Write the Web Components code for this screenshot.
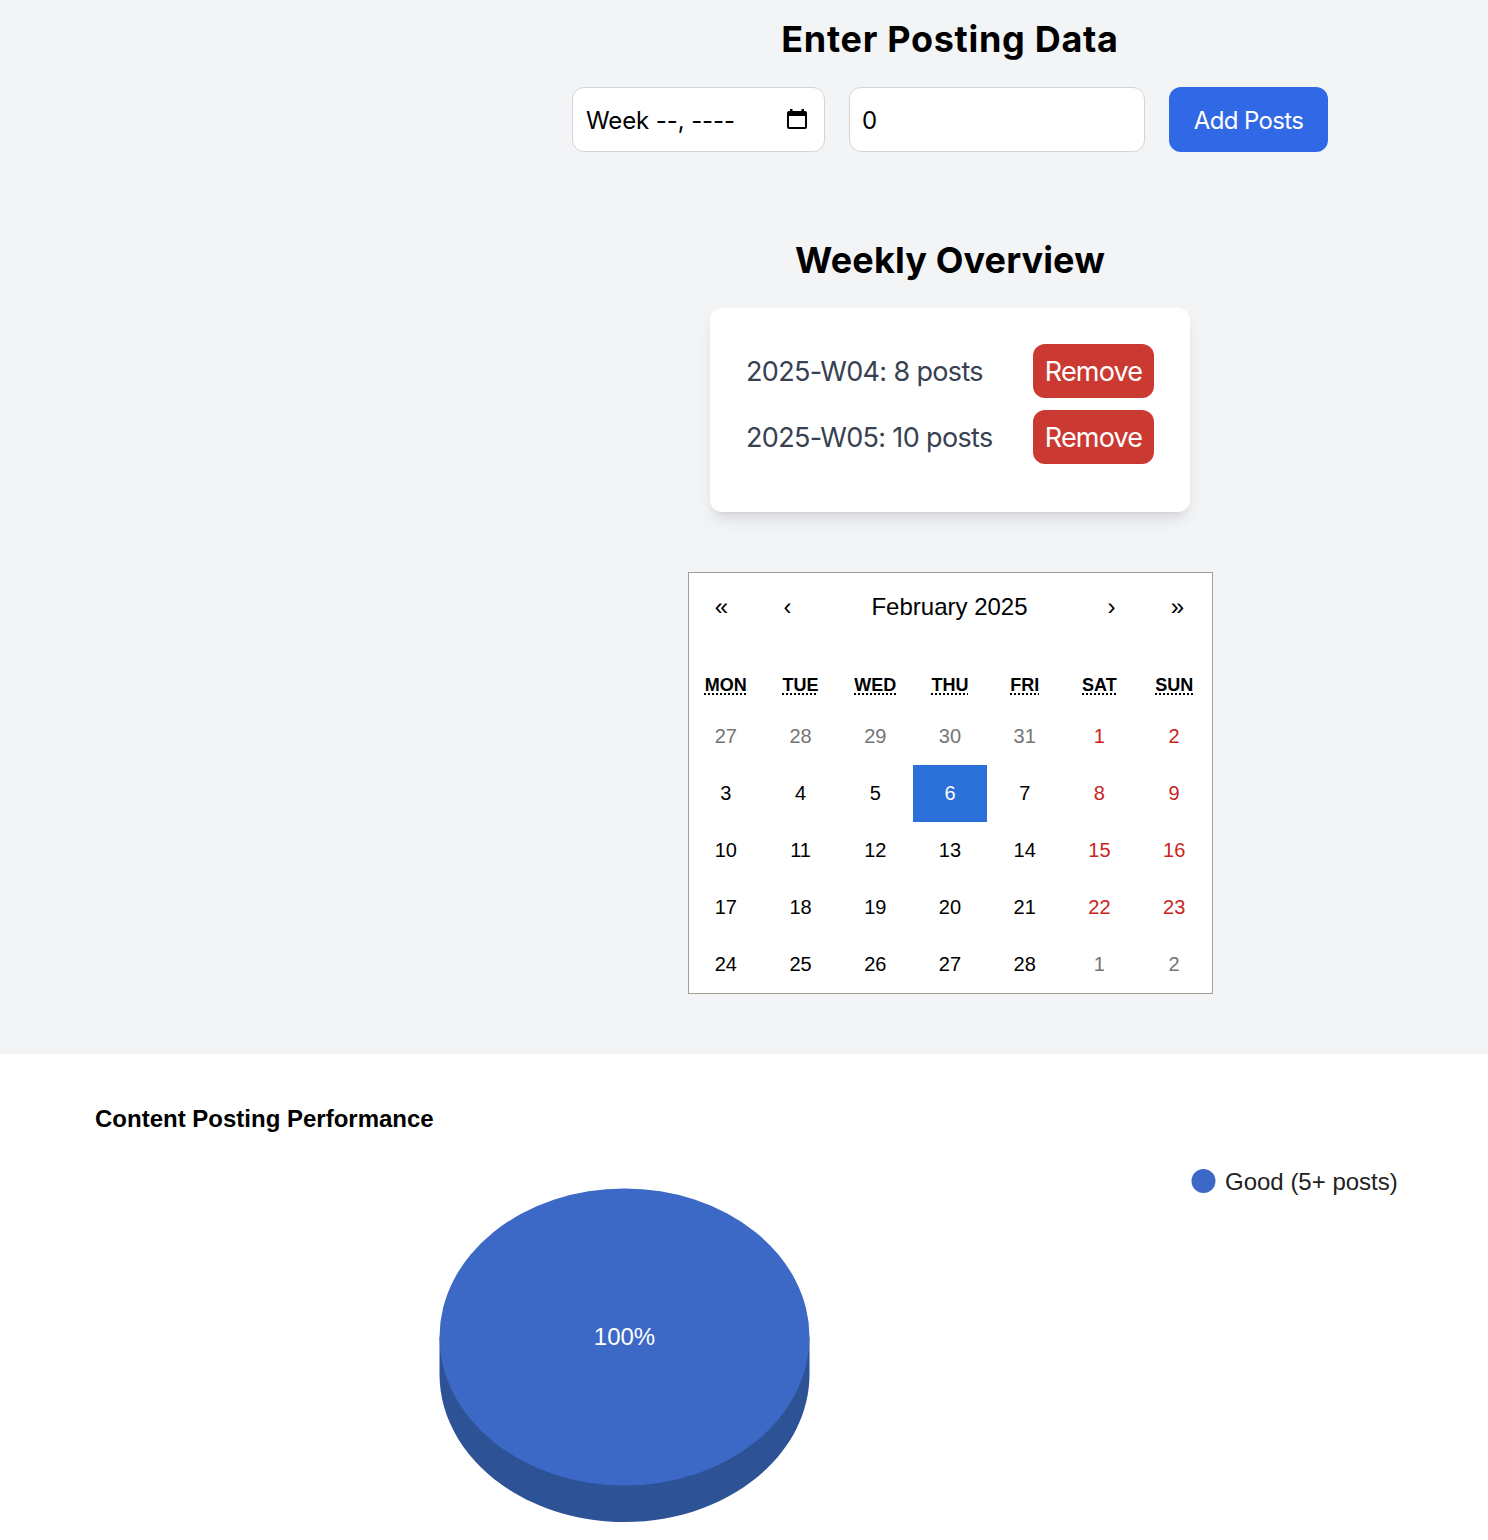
<!doctype html>
<html lang="en">
<head>
<meta charset="utf-8">
<title>Posting dashboard</title>
<style>
  html, body { margin: 0; background: #f3f4f6; }
</style>
</head>
<body>
<posting-page>
  <posting-form></posting-form>
  <weekly-overview>
    <week-row>2025-W04: 8 posts</week-row>
    <week-row>2025-W05: 10 posts</week-row>
  </weekly-overview>
  <post-calendar></post-calendar>
</posting-page>
<posting-chart></posting-chart>

<script>
const html = String.raw;

function define(name, markup) {
  customElements.define(
    name,
    class extends HTMLElement {
      constructor() {
        super();
        this.attachShadow({ mode: "open" });
        this.shadowRoot.innerHTML = markup;
      }
    }
  );
}

define("posting-page", html`
  <style>
    :host {
      display: flex;
      flex-direction: column;
      align-items: center;
      box-sizing: border-box;
      height: 1054px;
      margin-left: 412px;
      padding-top: 16px;
      font-family: Inter, "Liberation Sans", sans-serif;
    }
  </style>
  <slot></slot>
`);

define("posting-form", html`
  <style>
    :host { display: block; }
    h2 {
      margin: 0 0 24px;
      font-size: 36px;
      line-height: 47px;
      font-weight: 700;
      letter-spacing: 0.7px;
      text-align: center;
      color: #000;
    }
    form { display: flex; gap: 24px; }
    .field {
      box-sizing: border-box;
      display: flex;
      align-items: center;
      justify-content: space-between;
      height: 65px;
      padding: 2px 17px 0 13px;
      background: #fff;
      border: 1px solid #d1d5db;
      border-radius: 12px;
      font-size: 24px;
      letter-spacing: -0.1px;
      color: #000;
    }
    .week { width: 253px; }
    .count { width: 296px; padding-left: 12px; }
    svg { width: 20px; height: 20px; flex: none; margin-top: -3px; }
    button {
      width: 159px;
      height: 65px;
      padding: 2px 0 0;
      border: 0;
      border-radius: 12px;
      background: #3068e5;
      color: #fff;
      font: inherit;
      font-size: 24px;
      letter-spacing: -0.65px;
    }
  </style>
  <h2>Enter Posting Data</h2>
  <form>
    <div class="field week">
      <span>Week --, ----</span>
      <svg viewBox="0 0 20 20" fill="#000" fill-rule="evenodd"><path d="M3 0h2.500v2h9V0H17v2h1a2 2 0 0 1 2 2v14a2 2 0 0 1-2 2H2a2 2 0 0 1-2-2V4a2 2 0 0 1 2-2h1zM2 7v11h16V7z"/></svg>
    </div>
    <div class="field count"><span>0</span></div>
    <button type="button">Add Posts</button>
  </form>
`);

define("weekly-overview", html`
  <style>
    :host { display: block; margin-top: 88px; }
    h2 {
      margin: 0 0 28px;
      font-size: 36px;
      line-height: 40px;
      font-weight: 700;
      letter-spacing: 0.13px;
      text-align: center;
      color: #000;
    }
    .card {
      box-sizing: border-box;
      display: flex;
      flex-direction: column;
      gap: 12px;
      width: 480px;
      height: 204px;
      padding: 36px;
      background: #fff;
      border-radius: 12px;
      box-shadow: 0 10px 15px -3px rgb(0 0 0 / 0.1), 0 4px 6px -4px rgb(0 0 0 / 0.1);
    }
  </style>
  <h2>Weekly Overview</h2>
  <div class="card"><slot></slot></div>
`);

define("week-row", html`
  <style>
    :host {
      display: flex;
      align-items: center;
      justify-content: space-between;
      font-size: 27px;
      letter-spacing: -0.65px;
      color: #374151;
    }
    span { padding-top: 1px; }
    button {
      width: 121px;
      height: 54px;
      padding: 1px 0 0;
      border: 0;
      border-radius: 12px;
      background: #cb3a32;
      color: #fff;
      font: inherit;
      letter-spacing: -0.85px;
    }
  </style>
  <span><slot></slot></span>
  <button type="button">Remove</button>
`);

const days = [
  [27, "off"], [28, "off"], [29, "off"], [30, "off"], [31, "off"], [1, "end"], [2, "end"],
  [3], [4], [5], [6, "now"], [7], [8, "end"], [9, "end"],
  [10], [11], [12], [13], [14], [15, "end"], [16, "end"],
  [17], [18], [19], [20], [21], [22, "end"], [23, "end"],
  [24], [25], [26], [27], [28], [1, "off"], [2, "off"],
];
const weekdays = ["MON", "TUE", "WED", "THU", "FRI", "SAT", "SUN"];

define("post-calendar", html`
  <style>
    :host {
      display: block;
      box-sizing: border-box;
      width: 525px;
      height: 422px;
      margin-top: 60px;
      background: #fff;
      border: 1px solid #a0a096;
      font-family: "Liberation Sans", Arial, sans-serif;
      color: #000;
    }
    nav {
      display: grid;
      grid-template-columns: 66px 66px 1fr 66px 66px;
      height: 68px;
      margin-bottom: 24px;
      padding-right: 1px;
      font-size: 24px;
      text-align: center;
      align-items: center;
    }
    .week, .month { display: grid; grid-template-columns: repeat(7, 1fr); text-align: center; }
    .week { height: 41px; margin-bottom: 2px; align-items: center; font-size: 18px; font-weight: 700; }
    abbr {
      text-decoration: underline dotted;
      text-decoration-thickness: 2px;
      text-underline-offset: 2px;
      text-decoration-skip-ink: none;
    }
    .month div { height: 57px; line-height: 57px; font-size: 20px; }
    .off { color: #757575; }
    .end { color: #c9251c; }
    .now { background: #2a70d8; color: #fff; }
  </style>
  <nav>
    <span>«</span><span>‹</span><span>February 2025</span><span>›</span><span>»</span>
  </nav>
  <div class="week">${weekdays.map((d) => `<span><abbr>${d}</abbr></span>`).join("")}</div>
  <div class="month">${days.map(([n, kind]) => `<div class="${kind || ""}">${n}</div>`).join("")}</div>
`);

define("posting-chart", html`
  <style>
    :host { display: block; height: 486px; background: #fff; }
    svg { display: block; }
    text { font-family: "Liberation Sans", Arial, sans-serif; }
  </style>
  <svg width="1488" height="486" viewBox="0 1054 1488 486">
    <text x="95" y="1127" font-size="24" font-weight="700" fill="#000">Content Posting Performance</text>
    <circle cx="1203.500" cy="1181" r="12" fill="#3c69c5"/>
    <text x="1225" y="1190" font-size="24" fill="#222">Good (5+ posts)</text>
    <path d="M439.500 1337v37c0 81.700 82.800 148 185 148s185-66.300 185-148v-37z" fill="#2d5296"/>
    <ellipse cx="624.500" cy="1337" rx="185" ry="148.500" fill="#3c69c5"/>
    <text x="624.500" y="1345" font-size="24" fill="#fff" text-anchor="middle">100%</text>
  </svg>
`);
</script>
</body>
</html>
